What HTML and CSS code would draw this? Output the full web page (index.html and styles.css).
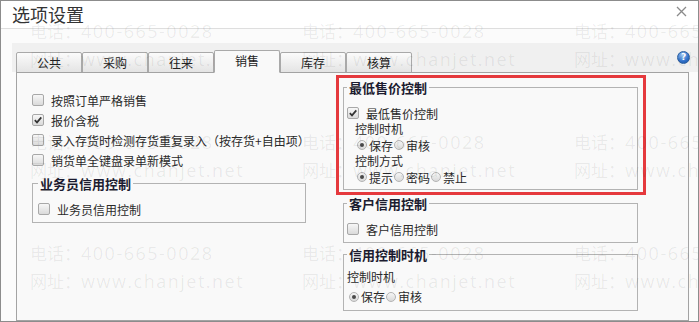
FILE: index.html
```html
<!DOCTYPE html>
<html>
    <head>
        <meta charset="utf-8">
        <title>选项设置</title>
        <link rel="stylesheet" href="styles.css">
    </head>
    <body>
        <div class="window">
            <div class="titlebar">
                <span class="title">选项设置</span>
                <svg class="close" width="11" height="11" viewBox="0 0 11 11">
                    <path d="M1 1 L10 10 M10 1 L1 10" stroke="#8a8a8a" stroke-width="1.3" fill="none"/>
                </svg>
            </div>

            <div class="content">
                <div class="tabbar">
                    <div class="tabs">
                        <div class="tab">公共</div>
                        <div class="tab">采购</div>
                        <div class="tab">往来</div>
                        <div class="tab active">销售</div>
                        <div class="tab">库存</div>
                        <div class="tab">核算</div>
                    </div>
                    <span class="help">?</span>
                </div>

                <div class="panel">
                    <div class="col-left">
                        <div class="check"><span class="box"></span>按照订单严格销售</div>
                        <div class="check"><span class="box on"><svg width="10" height="10" viewBox="0 0 10 10"><path d="M1.8 5.2 L4 7.4 L8.3 2.4" stroke="#333" stroke-width="1.7" fill="none"/></svg></span>报价含税</div>
                        <div class="check"><span class="box"></span>录入存货时检测存货重复录入（按存货+自由项）</div>
                        <div class="check"><span class="box"></span>销货单全键盘录单新模式</div>

                        <fieldset class="group group-left">
                            <legend>业务员信用控制</legend>
                            <div class="check small"><span class="box"></span>业务员信用控制</div>
                        </fieldset>
                    </div>

                    <div class="col-right">
                        <div class="highlight">
                            <fieldset class="group group-price">
                                <legend>最低售价控制</legend>
                                <div class="check small"><span class="box on"><svg width="10" height="10" viewBox="0 0 10 10"><path d="M1.8 5.2 L4 7.4 L8.3 2.4" stroke="#333" stroke-width="1.7" fill="none"/></svg></span>最低售价控制</div>
                                <div class="line indent">控制时机</div>
                                <div class="radios indent2">
                                    <span class="opt"><span class="radio on"></span>保存</span>
                                    <span class="opt"><span class="radio"></span>审核</span>
                                </div>
                                <div class="line indent">控制方式</div>
                                <div class="radios indent2">
                                    <span class="opt"><span class="radio on"></span>提示</span>
                                    <span class="opt"><span class="radio"></span>密码</span>
                                    <span class="opt"><span class="radio"></span>禁止</span>
                                </div>
                            </fieldset>
                        </div>

                        <fieldset class="group group-customer">
                            <legend>客户信用控制</legend>
                            <div class="check small"><span class="box"></span>客户信用控制</div>
                        </fieldset>

                        <fieldset class="group group-timing">
                            <legend>信用控制时机</legend>
                            <div class="line tall">控制时机</div>
                            <div class="radios tall indent-min">
                                <span class="opt"><span class="radio on"></span>保存</span>
                                <span class="opt"><span class="radio"></span>审核</span>
                            </div>
                        </fieldset>
                    </div>
                </div>
            </div>

            <!-- watermark tiles over the dialog -->
            <div class="watermark">
                <div class="mark">电话：<span class="latin">400-665-0028</span><br>网址：<span class="latin">www.chanjet.net</span></div>
                <div class="mark">电话：<span class="latin">400-665-0028</span><br>网址：<span class="latin">www.chanjet.net</span></div>
                <div class="mark">电话：<span class="latin">400-665-0028</span><br>网址：<span class="latin">www.chanjet.net</span></div>
                <div class="mark">电话：<span class="latin">400-665-0028</span><br>网址：<span class="latin">www.chanjet.net</span></div>
                <div class="mark">电话：<span class="latin">400-665-0028</span><br>网址：<span class="latin">www.chanjet.net</span></div>
                <div class="mark">电话：<span class="latin">400-665-0028</span><br>网址：<span class="latin">www.chanjet.net</span></div>
                <div class="mark">电话：<span class="latin">400-665-0028</span><br>网址：<span class="latin">www.chanjet.net</span></div>
                <div class="mark">电话：<span class="latin">400-665-0028</span><br>网址：<span class="latin">www.chanjet.net</span></div>
                <div class="mark">电话：<span class="latin">400-665-0028</span><br>网址：<span class="latin">www.chanjet.net</span></div>
            </div>
        </div>
    </body>
</html>
```

FILE: styles.css
```css
*{
    box-sizing: border-box;
}
body{
    margin: 0;
    background: #fff;
    font-family: "Noto Sans CJK SC", "Noto Sans", sans-serif;
    font-size: 12px;
    color: #2a2a2a;
}
.window{
    position: relative;
    width: 699px;
    height: 322px;
    border: 1px solid #8c8c8c;
    background: #f9f9f9;
    display: flex;
    flex-direction: column;
    overflow: hidden;
}
.titlebar{
    flex: none;
    height: 28px;
    background: #fff;
    border-bottom: 1px solid #dedede;
    display: flex;
    align-items: center;
    justify-content: space-between;
    padding: 0 11px 2px 11px;
}
.title{
    font-size: 18px;
    line-height: 24px;
    color: #333;
}
.close{
    align-self: flex-start;
    margin-top: 5px;
}
.content{
    flex: 1;
    display: flex;
    flex-direction: column;
    padding: 14px 0 0 11px;
    background: #fbfbfb;
}
.tabbar{
    flex: none;
    height: 29px;
    display: flex;
    background: #f0f0f0;
    padding-left: 4px;
}
.tabs{
    display: flex;
    align-items: flex-end;
    margin-bottom: -1px;
}
.tab{
    width: 66px;
    height: 21px;
    border: 1px solid #a9a9a9;
    border-radius: 2px 2px 0 0;
    background: linear-gradient(#fbfbfb, #e4e4e4);
    text-align: center;
    line-height: 19px;
    color: #222;
}
.tab.active{
    position: relative;
    z-index: 1;
    height: 23px;
    background: #f9f9f9;
    border-bottom-color: #f9f9f9;
    line-height: 20px;
}
.help{
    margin-left: auto;
    margin-right: 8px;
    align-self: center;
    width: 13px;
    height: 13px;
    border-radius: 50%;
    border: 1px solid #2c5f9e;
    background: radial-gradient(circle at 40% 30%, #9cc4f2, #2f6fc8 60%, #1d4f97);
    color: #fff;
    font: bold 9px/11px "DejaVu Sans", sans-serif;
    text-align: center;
}
.panel{
    flex: 1;
    width: 673px;
    margin-left: 4px;
    border: 1px solid #a3a3a3;
    background: #f9f9f9;
    display: grid;
    grid-template-columns: 304px 310px;
    align-items: start;
    padding: 2px 0 0 15px;
}
.col-left{
    padding-top: 15px;
}
.check{
    display: flex;
    align-items: center;
    height: 20px;
    white-space: nowrap;
}
.check.small{
    height: 16px;
}
.box{
    flex: none;
    width: 12px;
    height: 12px;
    margin-right: 7px;
    border: 1px solid #a8a8a8;
    border-radius: 2px;
    background: linear-gradient(#f7f7f7, #dadada);
    display: flex;
    align-items: center;
    justify-content: center;
}
.group{
    margin: 0;
    border: 1px solid #b3b3b3;
    min-width: 0;
}
.group legend{
    padding: 0 2px;
    font-weight: bold;
    font-size: 13px;
    line-height: 17px;
    color: #1c1c30;
}
.group-left{
    width: 274px;
    margin-top: 5px;
    padding: 9px 5px 5px 5px;
}
.highlight{
    height: 120px;
    border: 3px solid #e5393d;
    padding: 1px 0 0 4px;
}
.group-price{
    width: 295px;
    padding: 9px 3px 4px 3px;
}
.line{
    height: 16px;
    line-height: 16px;
}
.radios{
    display: flex;
    align-items: center;
    height: 16px;
}
.indent{
    padding-left: 8px;
}
.indent2{
    padding-left: 10px;
}
.indent-min{
    padding-left: 2px;
}
.opt{
    display: flex;
    align-items: center;
    margin-right: 1px;
}
.radio{
    width: 10px;
    height: 10px;
    margin-right: 2px;
    border-radius: 50%;
    border: 1px solid #b4b4b4;
    background: linear-gradient(#f6f6f6, #d9d9d9);
    display: flex;
    align-items: center;
    justify-content: center;
}
.radio.on::after{
    content: "";
    width: 4px;
    height: 4px;
    border-radius: 50%;
    background: #4a4a4a;
}
.group-customer{
    width: 295px;
    margin-left: 7px;
    padding: 9px 3px 5px 3px;
}
.group-timing{
    width: 295px;
    margin: 3px 0 0 7px;
    padding: 4px 3px 3px 3px;
}
.tall{
    height: 20px;
    line-height: 20px;
}
.watermark{
    position: absolute;
    inset: 0;
    pointer-events: none;
    display: grid;
    grid-template-columns: repeat(3, 272px);
    grid-auto-rows: 111px;
    padding: 16px 0 0 29px;
    color: rgba(0, 0, 0, 0.07);
    font-size: 17px;
    line-height: 28px;
    white-space: nowrap;
}
.latin{
    font-family: "Open Sans", sans-serif;
    font-size: 18px;
    letter-spacing: 1.5px;
}
```
